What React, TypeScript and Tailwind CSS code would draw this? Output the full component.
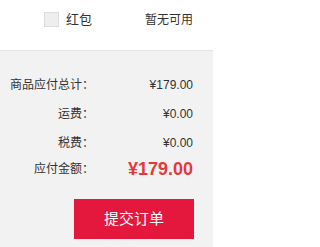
const ROWS = [
  { label: '商品应付总计：', value: '¥179.00' },
  { label: '运费：', value: '¥0.00' },
  { label: '税费：', value: '¥0.00' },
];

export default function App() {
  return (
    <div
      className="w-[213px] h-[247px] bg-[#f2f2f2] text-[#333]"
      style={{ fontFamily: '"Liberation Sans", "Noto Sans CJK SC", sans-serif' }}
    >
      <div className="h-[51px] bg-white border-b border-[#e6e6e6]">
        <div className="h-[39px] flex items-center">
          <span className="ml-[44px] w-[15px] h-[15px] bg-[#eeeeee] border border-[#dddddd]" />
          <span className="ml-[7px] text-[13px] leading-none">红包</span>
          <span className="ml-auto mr-[20px] text-[12px] leading-none">暂无可用</span>
        </div>
      </div>

      <div className="pt-[19px]">
        {ROWS.map((row) => (
          <div key={row.label} className="flex items-center h-[29px] text-[12px]">
            <span className="w-[94px] text-right">{row.label}</span>
            <span className="flex-1 text-right pr-[20px]">{row.value}</span>
          </div>
        ))}
        <div className="flex items-center h-[24px]">
          <span className="w-[94px] text-right text-[12px]">应付金额：</span>
          <span className="flex-1 text-right pr-[20px] text-[18px] font-bold text-[#e4393c]">
            ¥179.00
          </span>
        </div>
      </div>

      <div className="flex justify-end pr-[19px] mt-[18px]">
        <button className="w-[120px] h-[40px] bg-[#e4173c] text-white text-[15px]">提交订单</button>
      </div>
    </div>
  );
}
